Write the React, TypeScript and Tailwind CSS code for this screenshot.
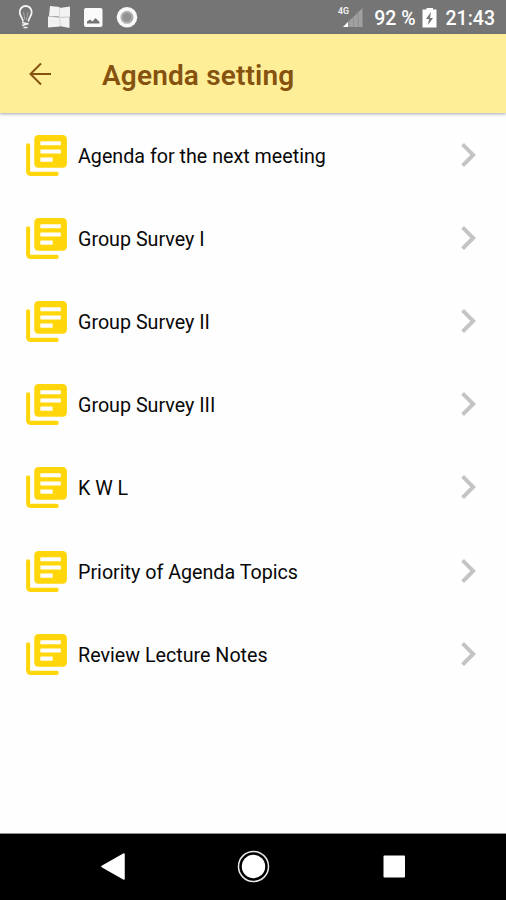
const ITEMS = [
  "Agenda for the next meeting",
  "Group Survey I",
  "Group Survey II",
  "Group Survey III",
  "K W L",
  "Priority of Agenda Topics",
  "Review Lecture Notes",
];

export default function App() {
  return (
    <div className="flex h-[900px] w-[506px] flex-col overflow-hidden bg-[#fefefe] font-['Roboto',sans-serif]">
      <StatusBar />

      {/* App bar */}
      <header className="z-10 flex h-[79px] shrink-0 items-center bg-[#ffee98] pl-[24px] text-[#85520f] shadow-[0_1px_3px_rgba(70,80,110,0.5)]">
        <button aria-label="Back" className="h-[32px] w-[32px]">
          <svg width="32" height="32" viewBox="0 0 32 32" fill="none" stroke="currentColor" strokeWidth="2">
            <path d="M27 16H6.500M17 5.500L6.500 16L17 26.500" />
          </svg>
        </button>
        <h1 className="ml-[46px] pt-[5px] text-[28px] font-semibold leading-8 tracking-[0.150px] whitespace-nowrap">
          Agenda setting
        </h1>
      </header>

      <main className="flex-1">
        <ul>
          {ITEMS.map((item) => (
            <ListRow key={item} label={item} />
          ))}
        </ul>
      </main>

      <NavigationBar />
    </div>
  );
}

function StatusBar() {
  return (
    <div className="flex h-[34px] shrink-0 items-center justify-between bg-[#757575] pl-[14px] pr-[11px] text-white">
      <svg width="130" height="34" viewBox="14 0 130 34" fill="none">
        {/* Light bulb */}
        <path
          d="M23 21.500c0-3.500-3.300-5-3.300-9.500a6 6 0 0 1 12 0c0 4.500-3.300 6-3.300 9.500"
          stroke="#f2f2f2"
          strokeWidth="1.800"
        />
        <path d="M23.500 12l1.500 8M28 12l-1.500 8" stroke="#a8a8a8" strokeWidth="1" />
        <path d="M22 22.500l6.500 1.500M22 25.500l6.500-2M23.500 27.500h4" stroke="#f2f2f2" strokeWidth="1.600" />
        {/* Tiled windows */}
        <path d="M50 6l9.500 1v9.500l-10.500-.5zM59.500 8l10.500-1.500v10.500l-10.500 .5zM48 16.500l12 1v9l-12 1zM59.500 18l10-1v11l-10-2z" fill="#f2f2f2" />
        <path d="M59.500 7v10l1 9M49 16.500l10.500 1 10-1" stroke="#d0d0d0" strokeWidth="0.800" />
        {/* Picture */}
        <rect x="84" y="8" width="18.500" height="19" rx="2" fill="#fafafa" />
        <path d="M87 23.500v-2l3-2 2.500 2 3-3.500 4 4v1.500z" fill="#757575" />
        {/* Record */}
        <circle cx="127" cy="17.300" r="10.300" fill="#fafafa" />
        <circle cx="127" cy="17.300" r="6.500" fill="#b0b0b0" />
        <circle cx="127" cy="17.300" r="4.500" fill="#929292" />
      </svg>

      <div className="flex h-full items-center text-[19.500px] font-medium whitespace-nowrap">
        <svg width="28" height="34" viewBox="336 0 28 34">
          <text x="338" y="14" fontSize="9.500" fontWeight="600" fill="#f5f5f5" textLength="11" lengthAdjust="spacingAndGlyphs">4G</text>
          <path d="M343 27L362.500 8v19z" fill="#a0a0a0" />
          <path d="M343 27l5-5v5z" fill="#fff" />
          <path d="M349 19v8M353.500 16v11M358 11v16" stroke="#898989" strokeWidth="0.800" />
        </svg>
        <span className="ml-[10px] pt-[4px]">92 %</span>
        <svg className="ml-[6px]" width="15" height="34" viewBox="422 0 15 34">
          <path d="M422.500 9.500h4V8h6.500v1.500h3.500v18h-14z" fill="#fff" />
          <path d="M431 12l-5 7h3l-1 6 5-7h-3z" fill="#757575" />
        </svg>
        <span className="ml-[9px] pt-[4px]">21:43</span>
      </div>
    </div>
  );
}

function ListRow({ label }: { label: string }) {
  return (
    <li className="flex h-[83.200px] items-center pl-[21.500px] pr-[14px]">
      <svg className="mt-[1px] shrink-0" width="49" height="49" viewBox="0 0 24 24" fill="#ffd60a">
        <path d="M3 6Q2 6 2 7V20c0 1.100.9 2 2 2H17Q18 22 18 21T17 20H4V7Q4 6 3 6z" />
        <path d="M20 2H8c-1.100 0-2 .9-2 2v12c0 1.100.9 2 2 2h12c1.100 0 2-.9 2-2V4c0-1.100-.9-2-2-2zm-1 9H9V9h10v2zm-4 4H9v-2h6v2zm4-8H9V5h10v2z" />
      </svg>
      <span className="ml-[7.500px] flex-1 pt-[4px] text-[19.700px] leading-6 text-[#080808] whitespace-nowrap">{label}</span>
      <svg className="shrink-0" width="48" height="48" viewBox="0 0 24 24" fill="#c4c4c4">
        <path d="M10 6L8.590 7.410 13.170 12l-4.580 4.590L10 18l6-6z" />
      </svg>
    </li>
  );
}

function NavigationBar() {
  return (
    <nav className="flex h-[67px] shrink-0 items-center justify-between border-t border-[#8c8c8c] bg-black pl-[100px] pr-[100px]">
      <button aria-label="Back">
        <svg width="26" height="30" viewBox="0 0 26 30">
          <path d="M2 14.500L24 2v25z" fill="#fff" stroke="#fff" strokeWidth="1.500" strokeLinejoin="round" />
        </svg>
      </button>
      <button aria-label="Home">
        <svg width="34" height="34" viewBox="0 0 34 34">
          <circle cx="16.500" cy="16.500" r="15" fill="none" stroke="#e8e8e8" strokeWidth="1.500" />
          <circle cx="16.500" cy="16.500" r="11.700" fill="#fff" />
        </svg>
      </button>
      <button aria-label="Recent apps">
        <svg width="24" height="24" viewBox="0 0 24 24">
          <rect x="1.500" y="0.500" width="21.500" height="22" rx="1" fill="#fff" />
        </svg>
      </button>
    </nav>
  );
}
